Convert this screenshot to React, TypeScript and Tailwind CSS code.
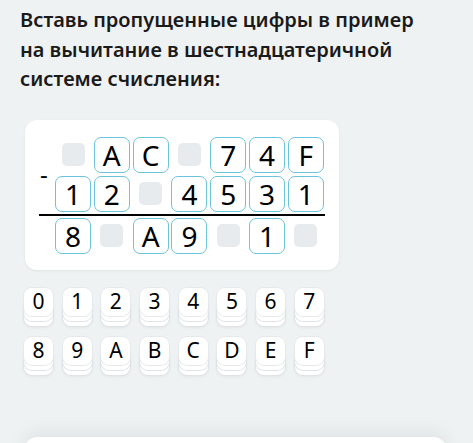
const top = ["", "A", "C", "", "7", "4", "F"];
const mid = ["1", "2", "", "4", "5", "3", "1"];
const res = ["8", "", "A", "9", "", "1", ""];
const keys1 = ["0", "1", "2", "3", "4", "5", "6", "7"];
const keys2 = ["8", "9", "A", "B", "C", "D", "E", "F"];

function Cell({ v }: { v: string }) {
  if (!v) {
    return (
      <div className="w-[36px] h-[36px] flex items-center justify-center">
        <div className="w-[23px] h-[23px] rounded-[5px] bg-[#e8ebee]"></div>
      </div>
    );
  }
  return (
    <div className="w-[36px] h-[36px] flex items-center justify-center rounded-[7px] border border-[#6cc3dc] bg-white text-[28px] leading-none text-black">
      {v}
    </div>
  );
}

function Row({ cells }: { cells: string[] }) {
  return (
    <div className="flex gap-[2.8px]">
      {cells.map((c, i) => (
        <Cell key={i} v={c} />
      ))}
    </div>
  );
}

function Key({ k }: { k: string }) {
  return (
    <button className="w-[29px] h-[28px] rounded-[8px] bg-white flex items-center justify-center text-[21px] leading-none text-black shadow-[0_0_0_1px_#e6e9eb,0_5px_0_0_#fff,0_5px_0_1px_#e0e3e5,0_10px_0_0_#fff,0_10px_0_1px_#e0e3e5,0_11px_3px_1px_rgba(0,0,0,0.05)]">
      {k}
    </button>
  );
}

export default function App() {
  return (
    <div
      className="w-[473px] h-[443px] overflow-hidden bg-[#eff2f3] px-[20px] pt-[5px]"
      style={{ fontFamily: '"Noto Sans", "Open Sans", sans-serif' }}
    >
      <div className="w-[410px] text-[20px] leading-[29.5px] font-semibold text-[#1a1a1a]">
        Вставь пропущенные цифры в пример на вычитание в шестнадцатеричной
        системе счисления:
      </div>

      <div className="mt-[26px] ml-[5px] w-[314px] rounded-[12px] bg-white shadow-[0_1px_3px_rgba(0,0,0,0.06)] pt-[17px] pb-[16px] pl-[14px]">
        <div className="w-[286px]">
          <div className="pl-[16px]">
            <Row cells={top} />
          </div>
          <div className="flex mt-[3px]">
            <div className="w-[16px] text-[24px] leading-none text-black -mt-[14px] pl-[1px]">-</div>
            <Row cells={mid} />
          </div>
          <div className="h-[2px] bg-black my-[2px]"></div>
          <div className="pl-[16px]">
            <Row cells={res} />
          </div>
        </div>
      </div>

      <div className="mt-[18px] ml-[4px] flex flex-col gap-[21px]">
        <div className="flex gap-[9.7px]">
          {keys1.map((k) => (
            <Key key={k} k={k} />
          ))}
        </div>
        <div className="flex gap-[9.7px]">
          {keys2.map((k) => (
            <Key key={k} k={k} />
          ))}
        </div>
      </div>

      <div className="mt-[72px] ml-[4px] w-[423px] h-[40px] rounded-t-[14px] bg-white shadow-[0_-6px_18px_rgba(0,0,0,0.06)]"></div>
    </div>
  );
}
